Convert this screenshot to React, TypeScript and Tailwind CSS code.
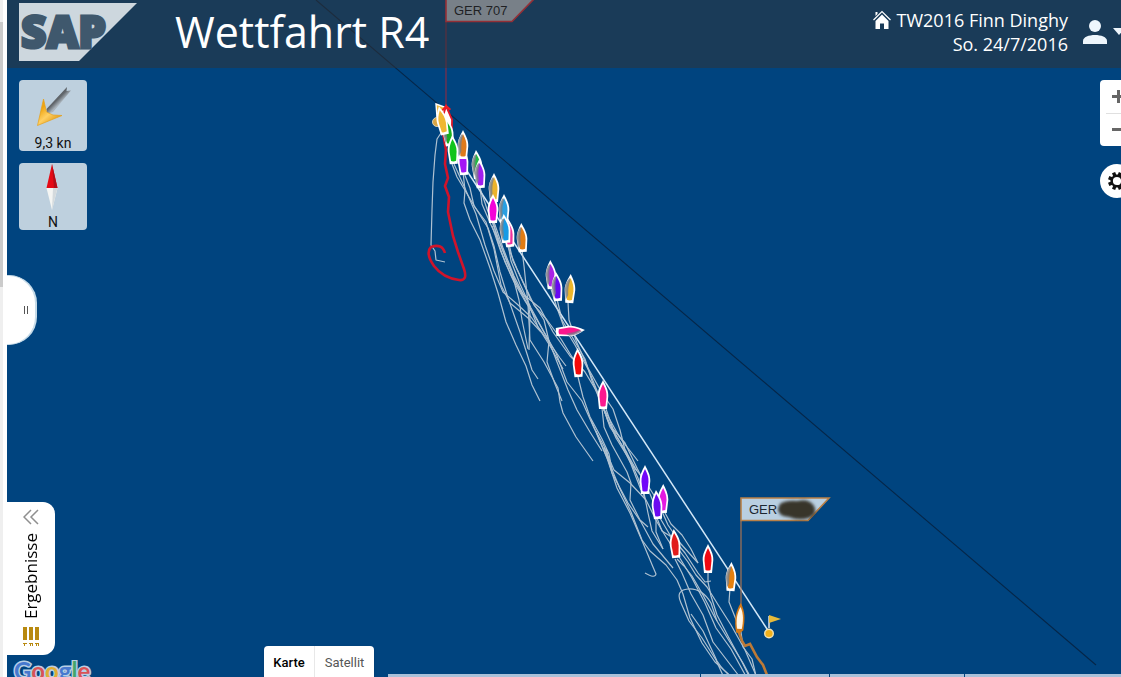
import React from "react";

type Boat = {
  x: number;
  y: number;
  color: string;
  rotate?: number;
  shade?: "left" | "right";
};

const BOATS: Boat[] = [
  { x: 448, y: 132, color: "#17b01f", rotate: -8, shade: "left" },
  { x: 453, y: 150, color: "#12c41c", rotate: -3 },
  { x: 463, y: 161, color: "#a416f5", rotate: -4 },
  { x: 463, y: 145, color: "#dd7a1c", shade: "left" },
  { x: 477, y: 165, color: "#22b843", rotate: -4, shade: "left" },
  { x: 480, y: 174, color: "#a01fee", rotate: -3, shade: "left" },
  { x: 494, y: 188, color: "#ecb32c", shade: "left" },
  { x: 493, y: 209, color: "#f304d8" },
  { x: 504, y: 209, color: "#2a9fe0", shade: "left" },
  { x: 509, y: 233, color: "#f0329c", rotate: -5 },
  { x: 505, y: 229, color: "#189be4", rotate: -5, shade: "left" },
  { x: 522, y: 238, color: "#e07c14", rotate: -3, shade: "left" },
  { x: 551, y: 275, color: "#a922e6", rotate: -3, shade: "left" },
  { x: 557, y: 287, color: "#6708f2", rotate: -4, shade: "left" },
  { x: 570, y: 289, color: "#edb72b", rotate: 3, shade: "left" },
  { x: 570, y: 331, color: "#fa168d", rotate: 86, shade: "right" },
  { x: 578, y: 363, color: "#f30a0a", rotate: -2 },
  { x: 603, y: 395, color: "#fb188f" },
  { x: 645, y: 480, color: "#7108f8" },
  { x: 663, y: 499, color: "#e519e1", rotate: 1 },
  { x: 657, y: 505, color: "#6b0af0", rotate: -4 },
  { x: 675, y: 544, color: "#e11c1c", rotate: -5 },
  { x: 708, y: 559, color: "#f20811" },
  { x: 731, y: 577, color: "#e5800f", rotate: 2, shade: "left" },
];

const TRAILS: string[] = [
  "M441 133L437 139L435 155L433 182L432 210L431 245L435 251L436 260L445 262",
  "M452 164L457 177L466 192L475 207L488 228L494 246L500 272L508 298L520 332L528 357L532 370L538 379",
  "M463 172L465 190L464 203L470 220L480 240L490 268L498 293L506 322L516 345L526 366L532 385L540 401",
  "M464 173L470 188L474 206L486 222L494 249L501 285L510 303L528 318L541 332",
  "M454 164L464 186L476 214L485 245L494 271L503 292L517 304L531 317L544 335L560 358L566 366",
  "M480 187L482 204L491 225L501 246L512 273L519 300L522 320L528 349",
  "M480 188L487 209L496 232L507 262L517 285L528 305L530 340L544 362L558 388L560 402L563 413L576 437L593 461",
  "M493 221L498 242L505 262L514 282L525 301L537 320L549 341L557 362L568 390L577 410L590 432L602 451",
  "M494 222L503 248L514 276L523 294L540 308L553 332L570 356L577 363",
  "M508 244L511 261L520 284L531 308L543 330L556 353L567 382L582 401L594 428L604 446L611 469",
  "M506 242L517 269L530 298L544 320L549 341L547 362L555 384L562 401",
  "M509 244L513 261L526 288L534 305L547 320L561 339L572 357L585 372L597 392L605 411L620 438L638 461",
  "M492 226L501 252L512 277L527 300L538 327L550 346L563 369",
  "M522 250L524 266L527 294L530 315L529 350",
  "M551 289L557 308L564 327L575 345L589 371L600 398L610 427L626 451L638 478L645 499",
  "M557 299L562 320L574 340L585 359L592 381L603 408L616 438L629 459L641 490",
  "M568 302L569 320L577 343L588 368L602 393L613 409L620 430L625 450L637 471",
  "M578 377L583 397L590 417L602 439L609 454L612 470",
  "M603 407L608 421L619 440L630 462L645 481L657 500L668 525L681 544L698 563",
  "M602 408L604 427L612 445L627 472L631 483L630 500L640 520L648 527",
  "M606 409L613 429L625 443L637 468L650 494L660 518L670 535L685 553L698 573L705 582L711 581",
  "M591 420L601 444L611 467L620 489L631 512L642 540L650 551L666 565L677 580L683 594L690 618L702 643L715 662L735 680",
  "M596 431L607 458L617 488L630 513L643 543L653 567L656 574Q655 579 645 573",
  "M604 447L614 470L630 483L646 500L657 522L666 537L681 560L692 578L705 603L716 628L731 649L748 680",
  "M606 448L612 473L628 503L641 522L653 544L673 568",
  "M644 493L648 513L652 531L663 549",
  "M656 518L656 532L663 549",
  "M657 518L662 531L670 536L679 550L688 562L696 575L707 587L717 603L731 625L745 650L758 680",
  "M664 511L671 524L682 535L691 549L698 563",
  "M675 559L682 573L691 594L703 615L713 642L726 659L739 676",
  "M677 559L684 566L692 576L703 595L714 616L728 639L743 663L752 680",
  "M708 573L708 582L711 596L717 615L729 638L742 662L751 680",
  "M730 588L729 602L735 617L741 632L743 647L752 659L757 680",
  "M725 680L716 660L702 638L689 621L681 603Q675 590 688 589Q702 588 711 603L717 621",
  "M737 680Q726 675 717 661L703 631L691 614",
];

function BoatMark({ x, y, color, rotate = 0, shade }: Boat) {
  return (
    <g transform={`translate(${x} ${y}) rotate(${rotate})`}>
      <path
        d="M0 -15C2.500 -10 5.500 -5 5.300 1L4 14H-4L-5.300 1C-5.500 -5 -2.500 -10 0 -15Z"
        fill="#fff"
      />
      <path
        d="M0 -11C2.500 -6 3.700 -3 3.500 2L2.500 11Q0 12 -2.500 11L-3.500 2C-3.700 -3 -2.500 -6 0 -11Z"
        fill={color}
      />
      {shade === "left" && (
        <path d="M-1 -11C-4 -7 -5.300 -4 -4.900 2L-3.800 11L-1.500 6Q-2.200 -3 0 -9Z" fill="#7b7f86" opacity=".8" />
      )}
      {shade === "right" && (
        <path d="M1 -12C3 -8 5 -4 4.600 1L2.500 4Q2 -4 0 -9Z" fill="#7b6f86" opacity=".75" />
      )}
    </g>
  );
}

function RaceCanvas() {
  return (
    <svg
      className="pointer-events-none absolute inset-0 h-full w-full"
      role="img"
      aria-label="Regattakarte"
    >
      <defs>
        <filter id="smudge" x="-20%" y="-30%" width="140%" height="160%">
          <feGaussianBlur stdDeviation="1.6" />
        </filter>
      </defs>
      <g transform="translate(-7 0)" fill="none">
        <path d="M316 0L1096 665" stroke="#052648" strokeWidth="1.1" />
        <path d="M446 139L769 632" stroke="#d3e8f8" strokeWidth="1.5" />
        <g stroke="#c3d0db" strokeWidth="1.2" strokeLinejoin="round" opacity=".9">
          {TRAILS.map((d) => (
            <path key={d} d={d} />
          ))}
        </g>
        <path
          d="M443 132L446 150L445 164L448 178L445 186L449 197L448 212L453 236L458 252L464 269Q468 281 459 280Q443 278 434 266Q425 253 431 247Q442 243 445 253"
          stroke="#d0142b"
          strokeWidth="2.6"
        />
        <path d="M738 630L742 641L745 646L750 644L757 657L763 665L769 680" stroke="#bd7a37" strokeWidth="2.6" />

        <path d="M446 21V108" stroke="#842c45" strokeWidth="1.2" />
        <path d="M446 -1H534L512 21.500H446Z" fill="#bccfdf" stroke="#f52c3a" strokeWidth="1.600" />
        <text x="454" y="15" fill="#0a0f14" className="font-['Liberation_Sans',sans-serif] text-[13px]">
          GER 707
        </text>

        <path d="M436 104L447 108L437 117Z" fill="#edb83b" stroke="#fff" strokeWidth="1.4" />
        <circle cx="437" cy="122" r="4.500" fill="#d7a544" stroke="#d9d0b5" />
        <g transform="translate(447 119) rotate(-4)">
          <path d="M0 -13L5 1L4 12H-3L-5 0Z" fill="#fff" stroke="#e11728" strokeWidth="1.8" />
          <path d="M-4 -9L0 -13L4 -9" stroke="#f01c22" strokeWidth="2" />
        </g>
        {BOATS.slice(0, 1).map((b) => (
          <BoatMark key={`${b.x}-${b.y}`} {...b} />
        ))}
        <BoatMark x={442} y={121} color="#efb733" rotate={-12} />
        {BOATS.slice(1).map((b) => (
          <BoatMark key={`${b.x}-${b.y}`} {...b} />
        ))}

        <path d="M741 521V606" stroke="#a87452" strokeWidth="1.2" />
        <path d="M741 498H829L808 520.500H741Z" fill="#b9cfe1" stroke="#b98047" strokeWidth="1.6" />
        <text x="749" y="514" fill="#1b2630" className="font-['Liberation_Sans',sans-serif] text-[13px]">
          GER
        </text>
        <path
          d="M780 504Q786 500 797 501Q809 498 814 506Q818 514 809 518Q798 521 789 517Q778 516 778 509Z"
          fill="#38342c"
          filter="url(#smudge)"
        />
        <g transform="translate(740 618) rotate(3)">
          <path d="M0 -15C5 -6 5 0 4 12L1 15H-3C-6 3 -5 -6 0 -15Z" fill="#d57916" />
          <path d="M0 -11C3.500 -4 3.500 3 2.300 11H-2.300C-4 3 -3.500 -4 0 -11Z" fill="#fff6e6" />
        </g>
        <path d="M769 628V616" stroke="#d3dde4" strokeWidth="1.6" />
        <path d="M769 615L781 619L769 623Z" fill="#e8bb3a" />
        <circle cx="769" cy="633.500" r="4.300" fill="#f2b11b" stroke="#f3e3b3" strokeWidth="1.4" />
      </g>
    </svg>
  );
}

function SapLogo() {
  return (
    <svg width="118" height="58" viewBox="0 0 118 58" role="img" aria-label="SAP" className="shrink-0">
      <path d="M0 0H118L60 58H0Z" fill="#cdd7de" />
      <text
        x="2"
        y="45"
        fill="#3f586d"
        stroke="#3f586d"
        strokeWidth="3"
        className="font-['Open_Sans',sans-serif] text-[44px] font-extrabold"
      >
        SAP
      </text>
    </svg>
  );
}

function HomeIcon() {
  return (
    <svg width="18" height="20" viewBox="0 0 18 20" aria-hidden="true">
      <path d="M.5 10L9 1.500L17.500 10" fill="none" stroke="#fff" strokeWidth="1.200" />
      <path d="M2.500 2H4.500V4L2.500 6Z" fill="#fff" />
      <path d="M9 4.500L15.500 11V19H11V13.500H7V19H2.500V11Z" fill="#fff" />
    </svg>
  );
}

function WindIcon() {
  return (
    <svg width="44" height="44" viewBox="31 84 44 44" aria-hidden="true">
      <defs>
        <linearGradient id="shaft" gradientUnits="userSpaceOnUse" x1="55" y1="98" x2="60" y2="103">
          <stop offset="0" stopColor="#5a5f64" />
          <stop offset=".4" stopColor="#62676c" />
          <stop offset="1" stopColor="#a9b3bb" />
        </linearGradient>
        <linearGradient id="head" gradientUnits="userSpaceOnUse" x1="42" y1="108" x2="54" y2="122">
          <stop offset="0" stopColor="#f0a510" />
          <stop offset=".5" stopColor="#ffd064" />
          <stop offset="1" stopColor="#e5a01b" />
        </linearGradient>
      </defs>
      <path d="M67 87L66.500 91L71 90.500L53 112L47 114L46.500 109Z" fill="url(#shaft)" />
      <path d="M43.500 99L46.500 112L53 115L62 115.500L37.500 125.500Z" fill="url(#head)" stroke="#e5a01b" strokeWidth=".7" />
    </svg>
  );
}

function CompassIcon() {
  return (
    <svg width="14" height="48" viewBox="0 0 14 48" aria-hidden="true">
      <path d="M6 0L11.500 24H.5Z" fill="#e50914" />
      <path d="M6 0L11.500 24H8Z" fill="#b00d18" />
      <path d="M.5 24H11.500L6 46Z" fill="#f4f5f3" />
      <path d="M7 24H11.500L6 46Z" fill="#d4dadd" />
    </svg>
  );
}

function Gear() {
  return (
    <svg width="20" height="20" viewBox="-10 -10 20 20" aria-hidden="true">
      {[22.5, 67.5, 112.5, 157.5, 202.5, 247.5, 292.5, 337.5].map((a) => (
        <rect key={a} x="-1.700" y="-9" width="3.400" height="4" fill="#111" transform={`rotate(${a})`} />
      ))}
      <circle r="5.300" fill="none" stroke="#111" strokeWidth="2.400" />
    </svg>
  );
}

function GoogleWord() {
  return (
    <svg width="82" height="17" viewBox="0 0 82 17" role="img" aria-label="Google" className="block">
      <text
        x="3"
        y="20"
        stroke="#b9cfe4"
        strokeWidth="3"
        paintOrder="stroke"
        className="font-['Lato',sans-serif] text-[24px] font-bold"
      >
        <tspan fill="#4779cf">G</tspan>
        <tspan fill="#d95356">o</tspan>
        <tspan fill="#dfad34">o</tspan>
        <tspan fill="#4779cf">g</tspan>
        <tspan fill="#45a76a">l</tspan>
        <tspan fill="#d95356">e</tspan>
      </text>
    </svg>
  );
}

export default function App() {
  return (
    <div className="flex h-screen overflow-hidden bg-white font-['Open_Sans',sans-serif]">
      <div className="mr-1 flex w-[3px] shrink-0 flex-col bg-[#efefef]">
        <div className="mt-[22px] h-[265px] bg-[#cbcbcb]" />
      </div>

      <div className="relative flex min-w-0 flex-1 flex-col overflow-hidden bg-[#00447f]">
        <RaceCanvas />

        <header className="relative flex h-[68px] shrink-0 items-start bg-[#333231]/50 pl-3 pt-[3px] text-white">
          <SapLogo />
          <h1 className="ml-[38px] text-[43px] leading-[58px] whitespace-nowrap">Wettfahrt R4</h1>
          <div className="ml-auto flex shrink-0 flex-col items-end pt-[5px] text-[18px] leading-6">
            <a href="#event" className="flex items-center gap-[6px]">
              <HomeIcon />
              TW2016 Finn Dinghy
            </a>
            <span>So. 24/7/2016</span>
          </div>
          <button aria-label="Benutzer" className="-mr-1 ml-[15px] mt-[17px] flex shrink-0 items-start gap-[6px]">
            <svg width="24" height="24" viewBox="0 0 24 24" fill="#eef6fc" aria-hidden="true">
              <circle cx="12" cy="6" r="6" />
              <path d="M0 24V21C0 13 24 13 24 21V24Z" />
            </svg>
            <svg width="12" height="24" viewBox="0 0 12 24" fill="#eef6fc" aria-hidden="true">
              <path d="M0 8H12L6 15Z" />
            </svg>
          </button>
        </header>

        <div className="relative flex min-h-0 flex-1">
          <div className="flex w-24 shrink-0 flex-col items-start pt-3 font-['Roboto',sans-serif] text-[14px] leading-4 text-[#111]">
            <div className="ml-3 flex h-[71px] w-[68px] shrink-0 flex-col items-center justify-between rounded bg-[#bed0de] pt-1">
              <WindIcon />
              <span>9,3 kn</span>
            </div>
            <div className="ml-3 mt-3 flex h-[67px] w-[68px] shrink-0 flex-col items-center justify-between rounded bg-[#bed0de] pt-px">
              <CompassIcon />
              <span>N</span>
            </div>
            <button
              aria-label="Seitenleiste"
              className="mt-[45px] flex h-[70px] w-[30px] shrink-0 items-center justify-end rounded-r-[28px] border-y border-r-2 border-[#c6dbe8] bg-white pr-[7px]"
            >
              <span className="h-2 w-1 border-x border-[#555]" />
            </button>
            <button className="mt-auto flex h-[153px] w-12 shrink-0 flex-col items-center rounded-r-xl bg-white pt-[7px] font-['Open_Sans',sans-serif] text-black">
              <svg width="16" height="16" viewBox="0 0 16 16" fill="none" stroke="#8f8f8f" strokeWidth="1.5" aria-hidden="true">
                <path d="M8 1L1 8L8 15M15 1L8 8L15 15" />
              </svg>
              <span className="mt-2 rotate-180 text-[17px] leading-6 [writing-mode:vertical-rl]">Ergebnisse</span>
              <svg width="16" height="20" viewBox="0 0 16 20" className="mt-2" fill="#b8890f" aria-hidden="true">
                <path d="M0 0H4V13H0ZM6 0H10V13H6ZM12 0H16V13H12Z" />
                <path d="M0 16H4V17H2V19H1V17H0ZM6 16H10V19H9V17H8V19H7V17H6ZM12 16H16V19H15V17H14V19H13V17H12Z" />
              </svg>
            </button>
            <a href="#google" className="ml-1 mt-[5px] shrink-0">
              <GoogleWord />
            </a>
          </div>

          <div className="flex min-w-0 flex-1 flex-col justify-between pt-3">
            <div className="-mr-[15px] flex flex-col items-end gap-[18px]">
              <div className="flex h-[66px] w-9 flex-col items-center rounded-sm bg-white">
                <button aria-label="Vergrößern" className="flex w-full flex-1 items-center justify-center">
                  <svg width="13" height="13" viewBox="0 0 13 13" fill="#666" aria-hidden="true">
                    <path d="M5 0H8V5H13V8H8V13H5V8H0V5H5Z" />
                  </svg>
                </button>
                <div className="h-px w-6 bg-[#e0e0e0]" />
                <button aria-label="Verkleinern" className="flex w-full flex-1 items-center justify-center">
                  <svg width="13" height="3" viewBox="0 0 13 3" fill="#666" aria-hidden="true">
                    <path d="M0 0H13V3H0Z" />
                  </svg>
                </button>
              </div>
              <button
                aria-label="Einstellungen"
                className="mr-[2px] flex size-[34px] items-center justify-center rounded-full bg-white"
              >
                <Gear />
              </button>
            </div>

            <div className="flex items-end">
              <div className="ml-[161px] flex h-[31px] shrink-0 rounded-t-sm bg-white font-['Roboto',sans-serif] text-[13px] shadow-sm">
                <button className="w-[51px] border-r border-[#e8e8e8] pt-[3px] font-medium text-black">Karte</button>
                <button className="w-[59px] pt-[3px] text-[#565656]">Satellit</button>
              </div>
              <div className="ml-[14px] grid h-[3px] flex-1 grid-cols-[312fr_128fr_134fr_156fr] gap-px">
                <div className="bg-[#a9c1da]" />
                <div className="bg-[#a9c1da]" />
                <div className="bg-[#a9c1da]" />
                <div className="bg-[#a9c1da]" />
              </div>
            </div>
          </div>
        </div>
      </div>
    </div>
  );
}
